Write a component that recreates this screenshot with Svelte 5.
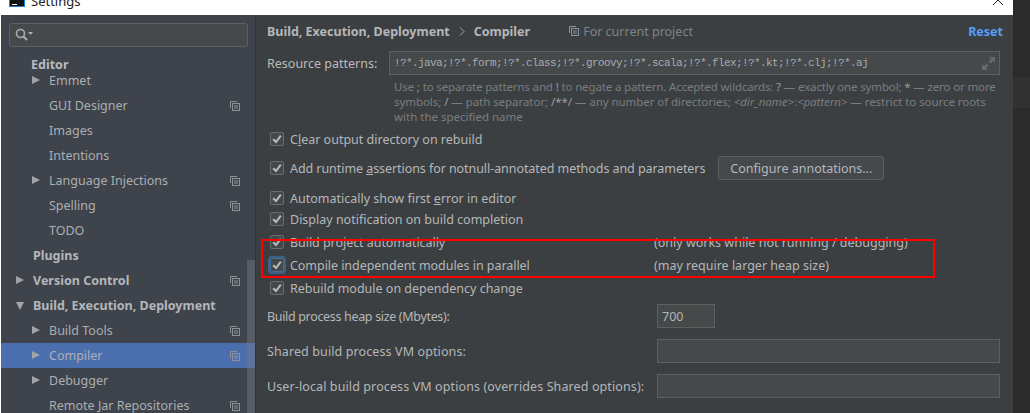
<script>
  const tree = [
    { label: 'Emmet', indent: 'l2', arrow: 'right' },
    { label: 'GUI Designer', indent: 'l2', copy: true },
    { label: 'Images', indent: 'l2' },
    { label: 'Intentions', indent: 'l2' },
    { label: 'Language Injections', indent: 'l2', arrow: 'right', copy: true },
    { label: 'Spelling', indent: 'l2', copy: true },
    { label: 'TODO', indent: 'l2' },
    { label: 'Plugins', indent: 'l1', bold: true },
    { label: 'Version Control', indent: 'l1', bold: true, arrow: 'right', copy: true },
    { label: 'Build, Execution, Deployment', indent: 'l1', bold: true, arrow: 'down' },
    { label: 'Build Tools', indent: 'l2', arrow: 'right', copy: true },
    { label: 'Compiler', indent: 'l2', arrow: 'right', copy: true, selected: true },
    { label: 'Debugger', indent: 'l2', arrow: 'right' },
    { label: 'Remote Jar Repositories', indent: 'l2', copy: true }
  ];
</script>

{#snippet copyIcon()}
  <svg class="copy" width="10" height="10" viewBox="0 0 10 10" fill="none" stroke="#8d9298" stroke-width="1">
    <path d="M0.5 7V0.5H7" />
    <rect x="2.5" y="2.5" width="7" height="7" />
    <path d="M4 5H8M4 7H8" />
  </svg>
{/snippet}

{#snippet check(focused)}
  <span class="box" class:focused>
    <svg width="14" height="14" viewBox="0 0 14 14" fill="none" stroke="#b9bcbe" stroke-width="2">
      <path d="M3.2 7.2L6 10L10.8 3.6" />
    </svg>
  </span>
{/snippet}

<div class="screen">
  <div class="window">
    <header class="titlebar">
      <svg class="logo" width="16" height="7" viewBox="0 0 16 7">
        <rect width="16" height="7" fill="#1b7fd6" />
        <rect x="1" y="0" width="14" height="6" fill="#111" />
        <rect x="3" y="4" width="5" height="1" fill="#fff" />
      </svg>
      <span class="title">Settings</span>
    </header>
    <div class="body">
      <aside class="sidebar">
        <div class="search">
          <svg width="18" height="14" viewBox="0 0 18 14" fill="none" stroke="#a9adb1">
            <circle cx="5.5" cy="5.5" r="4" stroke-width="1.6" />
            <path d="M8.5 8.5L12 12" stroke-width="2" />
            <path d="M13 4H18L15.5 7Z" fill="#a9adb1" stroke="none" />
          </svg>
        </div>
        <div class="section">Editor</div>
        <ul class="tree">
          {#each tree as item}
            <li class="row {item.indent}" class:selected={item.selected} class:bold={item.bold}>
              {#if item.arrow}
                <span class="arrow {item.arrow}"></span>
              {/if}
              <span class="label">{item.label}</span>
              {#if item.copy}{@render copyIcon()}{/if}
            </li>
          {/each}
        </ul>
        <div class="scrollbar"></div>
      </aside>
      <main class="content">
        <div class="crumbs">
          <span class="crumb">Build, Execution, Deployment</span>
          <svg class="sep" width="6" height="9" viewBox="0 0 6 9" fill="none" stroke="#a0a4a7"><path d="M1 .5L5 4.5L1 8.5" /></svg>
          <span class="crumb">Compiler</span>
          <span class="project">
            <svg class="copy plain" width="10" height="10" viewBox="0 0 10 10" fill="none" stroke="#8d9298" stroke-width="1">
              <path d="M0.5 7V0.5H7" />
              <rect x="2.5" y="2.5" width="7" height="7" />
              <path d="M4 5H8M4 7H8" />
            </svg>
            For current project
          </span>
          <span class="reset">Reset</span>
        </div>

        <div class="resource">
          <span class="res-label">Resource patterns:</span>
          <div class="input patterns">
            <span class="mono">!?*.java;!?*.form;!?*.class;!?*.groovy;!?*.scala;!?*.flex;!?*.kt;!?*.clj;!?*.aj</span>
            <svg width="13" height="13" viewBox="0 0 13 13" fill="#63686b">
              <path d="M7 0H13V6L11 4L8.500 6.500L6.500 4.500L9 2Z" />
              <path d="M0 7V13H6L4 11L6.500 8.500L4.500 6.500L2 9Z" />
            </svg>
          </div>
        </div>
        <p class="help">
          <span class="h1">Use <b>;</b> to separate patterns and <b>!</b> to negate a pattern. Accepted wildcards: <b>?</b> — exactly one symbol; <b>*</b> — zero or more</span><br />
          <span class="h2">symbols; <b>/</b> — path separator; <b>/**/</b> — any number of directories; <i>&lt;dir_name&gt;</i>:<i>&lt;pattern&gt;</i> — restrict to source roots</span><br />
          with the specified name
        </p>

        <div class="checks">
          <div class="chk c-clear">{@render check(false)}<span>C<u>l</u>ear output directory on rebuild</span></div>
          <div class="chk c-add">
            {@render check(false)}<span class="tight">Add runtime <u>a</u>ssertions for notnull-annotated methods and parameters</span>
            <button class="btn">Configure annotations...</button>
          </div>
          <div class="chk c-first">{@render check(false)}<span>Automatically show first <u>e</u>rror in editor</span></div>
          <div class="chk c-notif">{@render check(false)}<span>Display notification on build completion</span></div>
          <div class="chk c-auto">{@render check(false)}<span class="w">Build project automatically</span><span>(only works while not running / debugging)</span></div>
          <div class="chk c-par">{@render check(true)}<span class="w">Compile independent modules in parallel</span><span>(may require larger heap size)</span></div>
          <div class="chk c-dep">{@render check(false)}<span>Rebuild module on dependency change</span></div>
        </div>

        <div class="form">
          <label class="field"><span class="l-heap">Build process heap size (Mbytes):</span><span class="input small">700</span></label>
          <label class="field"><span class="l-wide">Shared build process VM options:</span><span class="input wide"></span></label>
          <label class="field"><span class="l-wide">User-local build process VM options (overrides Shared options):</span><span class="input wide"></span></label>
        </div>
      </main>
    </div>
    <div class="close">
      <svg width="10" height="5" viewBox="0 0 10 5" fill="none" stroke="#222"><path d="M0 5L5 0L10 5" /></svg>
    </div>
  </div>
  <div class="backdrop">
    <div class="band b1"></div>
    <div class="band b2"></div>
    <div class="band b3"></div>
  </div>
  <div class="highlight"></div>
</div>

<style>
  :global(body) { margin: 0; background: #2b2b2b; }
  .screen {
    position: relative;
    display: flex;
    width: 1030px;
    height: 413px;
    overflow: hidden;
    font-family: "Noto Sans", "Open Sans", sans-serif;
    font-size: 12.5px;
    color: #b4b7b9;
  }
  .window {
    position: relative;
    flex: 0 0 1013px;
    min-width: 0;
    width: 1013px;
    display: flex;
    flex-direction: column;
    background: #fff;
    padding-left: 1px;
    box-sizing: border-box;
  }
  .titlebar {
    flex: 0 0 15px;
    display: flex;
    align-items: flex-end;
    overflow: hidden;
    padding-left: 8px;
    background: #fff;
    color: #222;
    position: relative;
  }
  .logo { margin-bottom: 8px; }
  .title { font-size: 13px; margin-left: 6px; line-height: 15px; margin-bottom: 6px; }
  .close { position: absolute; right: 10px; top: 0; line-height: 0; }
  .body { flex: 1; display: flex; min-height: 0; min-width: 0; }

  .sidebar {
    position: relative;
    flex: 0 0 255px;
    box-sizing: border-box;
    background: #3e434c;
    border-right: 1px solid #313335;
    padding-top: 8px;
    overflow: hidden;
  }
  .search {
    margin: 0 7px 0 8px;
    height: 24px;
    box-sizing: border-box;
    background: #45494a;
    border: 1px solid #5d6062;
    border-radius: 3px;
    display: flex;
    align-items: center;
    padding-left: 5px;
  }
  .section {
    font-weight: 700;
    padding-left: 30px;
    margin-top: 10px;
    line-height: 15px;
    height: 11px;
    color: #b9bcbe;
    position: relative;
    z-index: 1;
  }
  .tree { list-style: none; margin: 0; padding: 0; }
  .row {
    position: relative;
    height: 25px;
    line-height: 25px;
    white-space: nowrap;
    color: #abafb2;
  }
  .row.l1 { padding-left: 32px; }
  .row.l2 { padding-left: 48px; }
  .row.bold { font-weight: 700; color: #b4b7b9; }
  .row.selected { background: #4b6eaf; }
  .arrow { position: absolute; top: 8px; width: 0; height: 0; }
  .l1 .arrow { left: 15px; }
  .l2 .arrow { left: 31px; }
  .arrow.right { border-left: 8px solid #a2a5a8; border-top: 4.5px solid transparent; border-bottom: 4.5px solid transparent; }
  .arrow.down { top: 9px; border-top: 8px solid #a2a5a8; border-left: 4.5px solid transparent; border-right: 4.5px solid transparent; }
  .copy { position: absolute; right: 15px; top: 8px; }
  .copy.plain { position: static; margin-right: 4px; }
  .scrollbar {
    position: absolute;
    right: 0;
    top: 245px;
    bottom: 0;
    width: 8px;
    background: rgba(118, 122, 128, 0.45);
  }

  .content {
    flex: 1;
    min-width: 0;
    background: #3c3f41;
    padding: 0 13px 0 11px;
    box-sizing: border-box;
  }
  .crumbs {
    display: flex;
    align-items: center;
    height: 32px;
  }
  .crumb { font-weight: 700; color: #b4b7b9; }
  .sep { margin: 0 9px 0 9px; }
  .project { margin-left: 39px; color: #7f8386; display: flex; align-items: center; }
  .reset { margin-left: auto; margin-right: -3px; font-weight: 700; color: #589df6; }
  .resource { display: flex; align-items: center; height: 24px; margin-top: 4px; }
  .res-label { flex: 0 0 122px; color: #bbb; }
  .input {
    display: flex;
    align-items: center;
    box-sizing: border-box;
    height: 24px;
    background: #45494a;
    border: 1px solid #5e6060;
  }
  .patterns {
    flex: 1;
    justify-content: space-between;
    padding: 0 4px 0 4px;
  }
  .mono { font-family: "Liberation Mono", monospace; font-size: 11px; color: #a9abac; white-space: nowrap; letter-spacing: -0.6px; }
  .help {
    margin: 4px 0 0 127px;
    font-size: 11.5px;
    line-height: 15px;
    color: #7a7d7f;
    white-space: nowrap;
  }
  .help b { color: #9a9d9f; font-weight: 400; }
  .h1 { letter-spacing: -0.14px; }
  .h2 { letter-spacing: -0.06px; }
  .checks { position: relative; height: 175px; margin-top: 5px; }
  .chk { display: flex; align-items: center; height: 20px; white-space: nowrap; color: #b4b7b9; margin-left: 3px; }
  .chk u { text-decoration-thickness: 1px; }
  .tight { letter-spacing: -0.065px; }
  .c-clear { margin-top: 4px; }
  .c-add { margin-top: 9px; }
  .c-first { margin-top: 10px; }
  .c-notif { margin-top: 1px; }
  .c-auto { margin-top: 3px; }
  .c-par { margin-top: 3px; }
  .c-dep { margin-top: 3px; }
  .w { flex: 0 0 364px; letter-spacing: -0.05px; }
  .box {
    flex: 0 0 14px;
    width: 14px;
    height: 14px;
    box-sizing: border-box;
    margin-right: 6px;
    background: #43494a;
    border: 1px solid #6b6b6b;
    border-radius: 2px;
    display: flex;
    align-items: center;
    justify-content: center;
  }
  .box svg { flex: none; }
  .box.focused { outline: 2px solid #3d6185; border-color: #466d94; }
  .btn {
    margin-left: 13px;
    height: 24px;
    width: 166px;
    padding: 0;
    background: #45494c;
    border: 1px solid #5e6060;
    border-radius: 3px;
    font: inherit;
    color: #b4b7b9;
  }
  .field { display: flex; align-items: center; justify-content: space-between; height: 24px; margin-bottom: 11px; white-space: nowrap; color: #b4b7b9; }
  .l-heap { letter-spacing: -0.33px; }
  .l-wide { letter-spacing: 0.11px; }
  .small { flex: 0 0 58px; width: 58px; margin-right: 285px; padding-left: 4px; }
  .wide { flex: 0 0 343px; width: 343px; }

  .backdrop { flex: 1; display: flex; flex-direction: column; background: #2b2b2b; }
  .band { flex: none; }
  .b1 { height: 77px; background: #2b2b2b; }
  .b2 { height: 31px; background: #313131; }
  .b3 { flex: 1; background: #2b2b2b; }

  .highlight {
    position: absolute;
    left: 261px;
    top: 239px;
    width: 674px;
    height: 39px;
    box-sizing: border-box;
    border: 2px solid #ff0000;
    pointer-events: none;
  }
</style>
